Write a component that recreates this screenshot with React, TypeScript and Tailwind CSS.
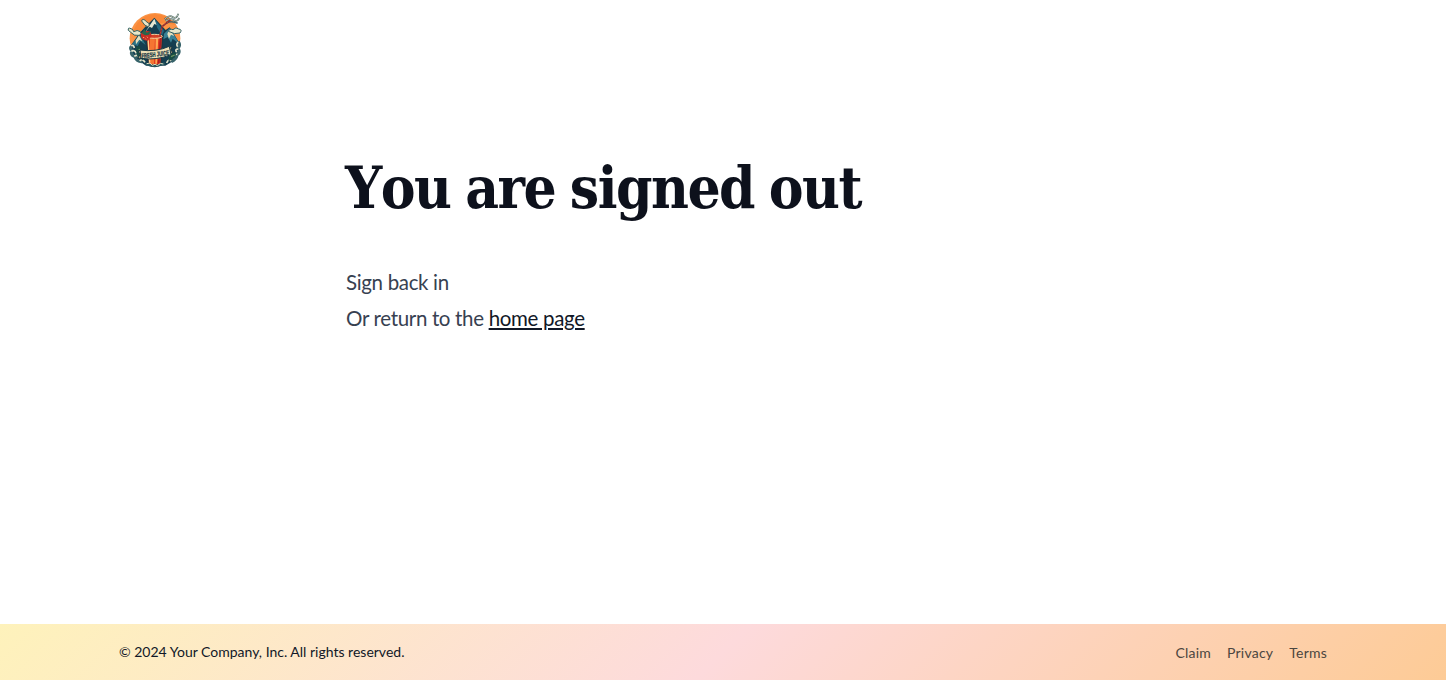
function JuiceLogo() {
  return (
    <svg viewBox="0 0 210 210" className="size-[70px] shrink-0" role="img" aria-label="Fresh Juice">
      <circle cx="105" cy="103" r="76" fill="#fb9446" />
      <path d="M42 76Q62 32 104 31Q142 30 168 64Q130 50 105 62Q80 58 42 100Z" fill="#f98838" />
      <path d="M33 124L58 88L76 68L103 41L137 78L149 70L180 120L171 164L136 185H78L42 160Z" fill="#153e50" />
      <path d="M74 86L103 44L113 64L103 60L96 72L89 68Z" fill="#e7e8d2" />
      <path d="M104 45L132 80L126 94L112 72Z" fill="#256a80" />
      <path d="M132 89L150 72L179 121L158 104L153 116L143 99L130 106Z" fill="#398194" />
      <path d="M148 76L163 96L153 92L147 104L142 90Z" fill="#e5dfbd" />
      <path d="M36 120L60 92L77 123L61 111L53 126Z" fill="#2c7485" />
      <path d="M57 94L67 112L58 107L48 121L47 109Z" fill="#e5dfbd" />
      <path d="M25 79Q23 69 33 74Q39 75 41 83Q52 76 61 83Q67 93 55 94Q42 96 36 88Z" fill="#e8e6c9" stroke="#315f61" strokeWidth="3" />
      <path d="M65 51Q66 43 76 49Q79 55 86 57Q91 64 84 68Q74 67 65 51Z" fill="#e8e6c9" stroke="#42605a" strokeWidth="3" />
      <path d="M145 82Q148 73 159 77Q168 67 176 75Q188 76 180 87Q164 93 145 82Z" fill="#e8e6c9" stroke="#315f61" strokeWidth="3" />
      <path d="M134 46Q147 31 158 39T175 29M137 51Q151 41 161 48T178 42M140 57Q154 49 173 58" fill="none" stroke="#48686a" strokeWidth="5" />
      <path d="M134 46Q147 31 158 39T175 29M137 51Q151 41 161 48T178 42" fill="none" stroke="#dfdcc0" strokeWidth="2" />
      <path d="M36 126Q27 131 36 141Q30 152 44 158Q51 174 67 173M175 113Q183 124 174 133Q182 145 172 152Q168 167 154 173" fill="none" stroke="#37636a" strokeWidth="9" />
      <path d="M34 126Q40 120 43 132M34 142Q43 136 49 148M43 157Q53 149 59 165M59 171Q68 162 75 175M175 115Q167 119 173 128M175 135Q163 135 170 145M172 151Q159 148 159 163M153 171Q145 163 140 177" fill="none" stroke="#e2e2c8" strokeWidth="5" />
      <path d="M47 130L58 124L66 149L74 160L69 169L52 158ZM145 161L155 144L170 147L162 163L146 172Z" fill="#174c43" />
      <path d="M57 135L62 148M153 158L164 153" stroke="#6d9463" strokeWidth="4" />
      <path d="M79 96H128L123 182Q104 193 85 182Z" fill="#df391f" stroke="#173743" strokeWidth="4" />
      <path d="M90 98H105L102 181H90Z" fill="#f57532" />
      <path d="M107 98H115L111 179H106Z" fill="#ffa751" />
      <path d="M84 101L89 176" stroke="#ffd28c" strokeWidth="4" />
      <path d="M122 101L116 178" stroke="#a91e25" strokeWidth="5" />
      <ellipse cx="103" cy="97" rx="24" ry="6" fill="#d34025" stroke="#f2d2a1" strokeWidth="3" />
      <path d="M119 98L126 68L151 48" fill="none" stroke="#842d33" strokeWidth="5" />
      <path d="M119 98L126 68L151 48" fill="none" stroke="#e64c2d" strokeWidth="2" strokeDasharray="5 5" />
      <path d="M63 88Q74 78 91 83L95 96L84 110Q67 110 63 98Z" fill="#c92d25" />
      <path d="M65 88L73 76L80 86L94 80L87 92L75 94Z" fill="#28664b" />
      <path d="M70 99L72 102M81 98L83 101M77 104L78 106" stroke="#ffc37c" strokeWidth="3" />
      <path d="M54 140L65 139V162L53 164L60 152ZM145 132L157 126L152 139L159 145L146 153Z" fill="#c6b284" stroke="#173743" strokeWidth="3" />
      <path d="M60 138Q107 145 148 127L153 152Q109 170 63 163Z" fill="#eee0b6" stroke="#173743" strokeWidth="3" />
      <text x="64" y="158" transform="rotate(-7 105 151)" textLength="83" lengthAdjust="spacingAndGlyphs" className="fill-[#173743] stroke-[#173743] stroke-[0.8] font-['Liberation_Sans'] text-[20px] font-bold">FRESH JUICE</text>
      <path d="M77 179Q105 193 134 178" fill="none" stroke="#28575e" strokeWidth="7" />
      <path d="M80 179Q91 173 97 184Q106 177 112 185Q122 174 130 180" fill="none" stroke="#d9dec2" strokeWidth="3" />
    </svg>
  );
}

export default function App() {
  return (
    <div className="flex min-h-screen flex-col bg-white font-['Lato',sans-serif] text-[#0f172a]">
      <header className="flex h-20 items-start pt-1 pl-[120px]">
        <a href="#" aria-label="Home"><JuiceLogo /></a>
      </header>
      <main className="flex-1 pt-[71px] pl-[345px]">
        <h1 className="h-[75px] w-[540px] whitespace-nowrap font-['DejaVu_Serif_Condensed','DejaVu_Serif',serif] text-[58px] leading-[75px] font-bold tracking-[-1.5px] text-[#0d111c] [font-kerning:none] [word-spacing:-2px]">You are signed out</h1>
        <div className="mt-[38px] pl-px text-[20.5px] leading-9 tracking-[-0.33px] text-[#374151]">
          <p>Sign back in</p>
          <p>Or return to the <a href="#" className="text-[#111827] underline">home page</a></p>
        </div>
      </main>
      <footer className="flex h-14 items-center justify-between bg-[linear-gradient(135deg,#fef2bb_0%,#fddadc_50%,#fdcb96_100%)] px-[119px] text-sm">
        <p className="text-[#111827]">© 2024 Your Company, Inc. All rights reserved.</p>
        <nav className="flex gap-4 pt-0.5 tracking-[0.22px] text-[#4b4640]">
          <a href="#">Claim</a>
          <a href="#">Privacy</a>
          <a href="#">Terms</a>
        </nav>
      </footer>
    </div>
  );
}
